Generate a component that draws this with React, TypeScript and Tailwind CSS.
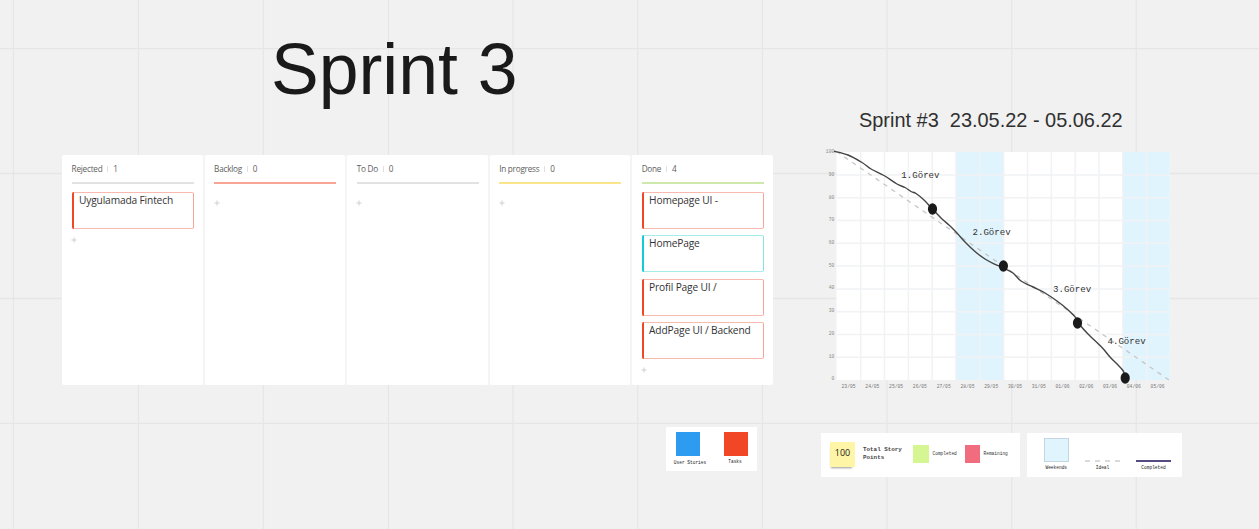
import React from 'react';

type Card = { title: string; tone: 'red' | 'cyan' };
type Column = { name: string; count: number; line: string; cards: Card[] };

const columns: Column[] = [
  { name: 'Rejected', count: 1, line: 'bg-[#e2e2e2]', cards: [{ title: 'Uygulamada Fintech', tone: 'red' }] },
  { name: 'Backlog', count: 0, line: 'bg-[#f9a595]', cards: [] },
  { name: 'To Do', count: 0, line: 'bg-[#e2e2e2]', cards: [] },
  { name: 'In progress', count: 0, line: 'bg-[#fbe58c]', cards: [] },
  {
    name: 'Done',
    count: 4,
    line: 'bg-[#cfe9ac]',
    cards: [
      { title: 'Homepage UI -', tone: 'red' },
      { title: 'HomePage', tone: 'cyan' },
      { title: 'Profil Page UI /', tone: 'red' },
      { title: 'AddPage UI / Backend', tone: 'red' },
    ],
  },
];

const tones = {
  red: 'border-x-[#f5a497] border-y-[#f8b9ae] before:bg-[#f24726]',
  cyan: 'border-x-[#86e4e0] border-y-[#a5ecea] before:bg-[#12cdd4]',
};

function Board() {
  return (
    <div className="absolute left-[62px] top-[154.5px] flex h-[230.5px] w-[711px] gap-[1.6px] rounded-sm bg-[#f5f5f5] font-['Open_Sans','Noto_Sans',sans-serif]">
      {columns.map((c) => (
        <section key={c.name} className="flex flex-1 flex-col rounded-[2px] bg-white pl-[9.6px] pr-[9.2px]">
          <header className="flex h-[27px] items-center pt-[2px] text-[8.2px] tracking-[-0.24px] text-[#5e5e5e]">
            <span>{c.name}</span>
            <span className="ml-[5px] mr-[4.8px] h-[6px] w-px bg-[#e0e0e0]" />
            <span>{c.count}</span>
          </header>
          <div className={`h-[2px] shrink-0 ${c.line}`} />
          <div className="flex flex-col gap-[6.5px] pt-[8px]">
            {c.cards.map((k) => (
              <div
                key={k.title}
                className={`relative h-[37px] rounded-[2px] border bg-white pl-[6.4px] text-[10.2px] leading-[15px] tracking-[-0.15px] text-[#333] before:absolute before:-inset-y-px before:-left-px before:w-[2.5px] before:rounded-l-[2px] ${tones[k.tone]}`}
              >
                {k.title}
              </div>
            ))}
          </div>
          <svg viewBox="0 0 6 6" className="ml-[-0.5px] mt-[8px] size-[6px]" stroke="#cfcfcf" strokeWidth="1">
            <path d="M3 .5V5.5M.5 3H5.5" />
          </svg>
        </section>
      ))}
    </div>
  );
}

type Point = [number, number];

const completed: Point[] = [
  [834, 151.2], [848, 155], [862, 162.5], [871, 169], [884, 175.5], [897, 184], [905, 187.5],
  [911, 191.5], [916, 193.5], [924, 200], [932, 208.5], [942, 219], [949, 225], [957, 233],
  [965, 242], [975, 251.5], [985, 259], [995, 264.3], [1003.5, 268], [1013, 273], [1021, 281],
  [1033, 287], [1045, 293], [1057, 301], [1067, 309], [1076, 318], [1080, 325], [1088, 334],
  [1102, 347.5], [1110, 357], [1118, 365], [1123, 370.5], [1125, 376],
];

// Catmull-Rom spline through the recorded points.
function smooth(p: Point[]) {
  let d = `M${p[0][0]} ${p[0][1]}`;
  for (let i = 0; i < p.length - 1; i++) {
    const a = p[Math.max(0, i - 1)];
    const b = p[i];
    const c = p[i + 1];
    const e = p[Math.min(p.length - 1, i + 2)];
    d += `C${b[0] + (c[0] - a[0]) / 6} ${b[1] + (c[1] - a[1]) / 6} ${c[0] - (e[0] - b[0]) / 6} ${c[1] - (e[1] - b[1]) / 6} ${c[0]} ${c[1]}`;
  }
  return d;
}

const days = [
  '23/05', '24/05', '25/05', '26/05', '27/05', '28/05', '29/05',
  '30/05', '31/05', '01/06', '02/06', '03/06', '04/06', '05/06',
];
const milestones: Point[] = [[932.5, 209], [1003.4, 266], [1077.5, 323], [1125.2, 378]];
const tasks = [
  { label: '1.Görev', x: 901.3, y: 178.3 },
  { label: '2.Görev', x: 972.5, y: 235.3 },
  { label: '3.Görev', x: 1053, y: 291.5 },
  { label: '4.Görev', x: 1107.5, y: 343.7 },
];

function Burndown() {
  return (
    <svg
      viewBox="820 140 360 255"
      className="absolute left-[820px] top-[140px] h-[255px] w-[360px] font-['Liberation_Mono',monospace]"
    >
      <rect x="836.5" y="152" width="333" height="228" fill="#fff" />
      <rect x="955.7" y="152" width="48" height="228" fill="#e0f4fe" />
      <rect x="1122.7" y="152" width="47" height="228" fill="#e0f4fe" />
      <g stroke="#f1f2f3" strokeWidth="1.5">
        {days.slice(1).map((d, i) => (
          <path key={d} d={`M${860.7 + i * 23.83} 152V380`} />
        ))}
        {days.slice(0, 9).map((d, i) => (
          <path key={d} d={`M836.5 ${174.9 + i * 22.8}H1169.5`} />
        ))}
      </g>
      <g fontSize="4.7" fill="#888" textAnchor="end">
        {[100, 90, 80, 70, 60, 50, 40, 30, 20, 10, 0].map((n, i) => (
          <text key={n} x="834.3" y={153.2 + i * 22.7}>{n}</text>
        ))}
      </g>
      <g fontSize="4.7" fill="#777" textAnchor="middle">
        {days.map((d, i) => (
          <text key={d} x={848.6 + i * 23.77} y="387.7">{d}</text>
        ))}
      </g>
      <path d="M836.5 151.5L1169 380" stroke="#c6c6c6" strokeWidth="1.3" strokeDasharray="4.5 5" fill="none" />
      <path d={smooth(completed)} stroke="#444" strokeWidth="1.4" fill="none" />
      {milestones.map(([x, y]) => (
        <ellipse key={x} cx={x} cy={y} rx="4.6" ry="5.7" fill="#1a1a1a" />
      ))}
      <g fontSize="9.1" fill="#333">
        {tasks.map((t) => (
          <text key={t.label} x={t.x} y={t.y}>{t.label}</text>
        ))}
      </g>
    </svg>
  );
}

function CardLegend() {
  return (
    <div className="absolute left-[666px] top-[427px] flex h-[43.5px] w-[90.5px] bg-white pt-[5px] font-['Liberation_Mono',monospace] text-[4.5px] leading-[5px] text-[#222]">
      <div className="flex w-[48px] flex-col items-center gap-[3.5px]">
        <div className="ml-[-4px] size-[24px] bg-[#2d9bf0]" />
        <span>User Stories</span>
      </div>
      <div className="flex w-[42px] flex-col items-center gap-[3px]">
        <div className="ml-[2px] size-[24px] bg-[#f24726]" />
        <span>Tasks</span>
      </div>
    </div>
  );
}

function PointsLegend() {
  return (
    <div className="absolute left-[821px] top-[432.5px] flex h-[44px] w-[199px] items-center bg-white pl-[9px] font-['Liberation_Mono',monospace] text-[4.5px] text-[#333]">
      <div className="mt-[-1px] flex h-[25px] w-[25px] items-center justify-center bg-[#fff5a6] pb-[2px] font-['Open_Sans',sans-serif] text-[9px] text-[#1a1a1a] shadow-[-1px_3px_2px_-2px_rgba(0,0,0,0.4)]">
        100
      </div>
      <div className="ml-[8px] mt-[-1px] w-[50px] text-[5.9px] font-bold leading-[8px] text-[#444]">
        Total Story
        <br />
        Points
      </div>
      <div className="mt-[-1px] h-[18px] w-[16px] bg-[#d5f692]" />
      <span className="ml-[3.5px] w-[32px]">Completed</span>
      <div className="mt-[-1px] h-[18px] w-[15.5px] bg-[#f16c7f]" />
      <span className="ml-[3.5px]">Remaining</span>
    </div>
  );
}

function LineLegend() {
  return (
    <div className="absolute left-[1026.5px] top-[432.5px] flex h-[44px] w-[155px] items-end bg-white pb-[7px] pl-[17.5px] font-['Liberation_Mono',monospace] text-[4.5px] leading-[5px] text-[#222]">
      <div className="flex w-[24.5px] flex-col items-center gap-[2.5px]">
        <div className="size-[24.5px] border border-[#c4d6e2] bg-[#e0f4fe]" />
        <span>Weekends</span>
      </div>
      <div className="ml-[16.5px] flex w-[35px] flex-col items-center gap-[2.5px]">
        <div className="flex h-[2px] w-full justify-between">
          {[0, 1, 2, 3].map((n) => (
            <i key={n} className="w-[5px] bg-[#dadada]" />
          ))}
        </div>
        <span>Ideal</span>
      </div>
      <div className="ml-[16px] flex w-[35px] flex-col items-center gap-[2.5px]">
        <div className="h-[2px] w-full bg-[#554d82]" />
        <span>Completed</span>
      </div>
    </div>
  );
}

function CanvasGrid() {
  return (
    <svg viewBox="0 0 1259 529" className="absolute inset-0 h-[529px] w-[1259px]" stroke="#e6e6e6" strokeWidth="1.3">
      {[13.5, 138.5, 263.5, 388.5, 513, 637.7, 762.5, 887, 1011.7, 1136.3].map((x) => (
        <path key={x} d={`M${x} 0V529`} />
      ))}
      {[48.7, 173.5, 298.5, 423.3].map((y) => (
        <path key={y} d={`M0 ${y}H1259`} />
      ))}
    </svg>
  );
}

export default function App() {
  return (
    <main className="relative h-[529px] w-[1259px] overflow-hidden bg-[#f1f1f1]">
      <CanvasGrid />
      <h1 className="absolute left-[270.5px] top-[29px] origin-left scale-x-[0.994] whitespace-nowrap font-['Liberation_Sans',sans-serif] text-[72px] leading-[80px] text-[#1a1a1a]">
        Sprint 3
      </h1>
      <h2 className="absolute left-[859px] top-[108px] origin-left scale-x-[0.958] whitespace-pre font-['Liberation_Sans',sans-serif] text-[20.8px] leading-[24px] text-[#303030]">
        {'Sprint #3  23.05.22 - 05.06.22'}
      </h2>
      <Board />
      <Burndown />
      <CardLegend />
      <PointsLegend />
      <LineLegend />
    </main>
  );
}
